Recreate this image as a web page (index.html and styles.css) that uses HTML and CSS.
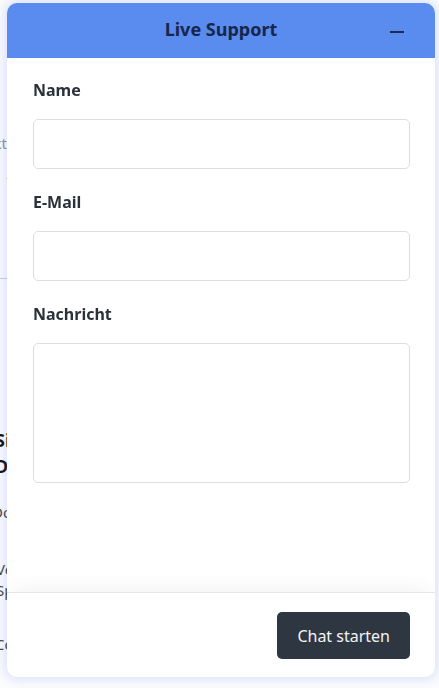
FILE: index.html
```html
<!DOCTYPE html>
<html lang="de">
<head>
<meta charset="utf-8">
<title>Live Support</title>
<link rel="stylesheet" href="styles.css">
</head>
<body>
<div class="page">
  <p class="bg-muted l1">Kontakt</p>
  <p class="bg-muted l2">–</p>
  <hr class="bg-rule">
  <h2 class="bg-head">Sichere Dokumente</h2>
  <p class="bg-text l3">Dokument</p>
  <p class="bg-text l4">Verwaltung<br>Speicher</p>
  <p class="bg-text l5">Contact</p>
</div>

<section class="chat">
  <header class="chat-header">
    <h1 class="chat-title">Live Support</h1>
    <button class="chat-min" aria-label="Minimieren">
      <svg width="14" height="2" viewBox="0 0 14 2"><rect width="14" height="2" fill="#1b2a4e"/></svg>
    </button>
  </header>
  <form class="chat-body">
    <label class="field-label">Name</label>
    <input class="field-input" type="text">
    <label class="field-label">E-Mail</label>
    <input class="field-input" type="email">
    <label class="field-label">Nachricht</label>
    <textarea class="field-area"></textarea>
  </form>
  <footer class="chat-footer">
    <button class="chat-start" type="button">Chat starten</button>
  </footer>
</section>
</body>
</html>
```
FILE: styles.css
```css
* { box-sizing: border-box; }
html, body { margin: 0; height: 100%; }
body {
  font-family: "Noto Sans", "Open Sans", "Liberation Sans", sans-serif;
  background: #fbfcfe;
  overflow: hidden;
}
.page {
  padding-top: 133px;
  margin-left: -50px;
  width: 200px;
}
.page p, .page h2 { margin: 0; white-space: nowrap; }
.bg-muted { color: #8a8f98; font-size: 15px; line-height: 20px; }
.l1 { margin-left: 2px !important; }
.l2 { margin: 17px 0 0 56px !important; font-size: 12px; line-height: 16px; }
.bg-rule { border: 0; border-top: 1px solid #cfd3da; margin: 92px 0 0; }
.bg-head { font-size: 18px; font-weight: 700; color: #111; line-height: 26px; margin: 148px 0 0 45px !important; white-space: normal !important; width: 60px; }
.bg-text { color: #444; font-size: 15px; line-height: 21px; }
.l3 { margin: 23px 0 0 42px !important; }
.l4 { margin: 36px 0 0 46px !important; }
.l5 { margin: 33px 0 0 45px !important; }

.chat {
  position: fixed;
  left: 7px;
  top: 3px;
  width: 428px;
  height: 674px;
  background: #fff;
  border-radius: 10px;
  box-shadow: 0 0 12px 2px rgba(90, 120, 220, 0.22);
  display: flex;
  flex-direction: column;
  overflow: hidden;
}
.chat-header {
  height: 55px;
  flex: none;
  background: #5a8bef;
  display: flex;
  align-items: center;
  justify-content: center;
  padding-bottom: 3px;
  position: relative;
}
.chat-title {
  margin: 0;
  font-size: 18px;
  font-weight: 700;
  color: #17264a;
}
.chat-min {
  position: absolute;
  right: 31px;
  top: 26px;
  padding: 0;
  border: 0;
  background: none;
  width: 14px;
  height: 2px;
  display: block;
  line-height: 0;
}
.chat-body {
  flex: 1;
  display: flex;
  flex-direction: column;
  padding: 20px 25px 0 26px;
}
.field-label {
  font-size: 16px;
  font-weight: 700;
  color: #2b313a;
  line-height: 24px;
  margin-bottom: 17px;
}
.field-input, .field-area {
  display: block;
  width: 100%;
  border: 1px solid #dcdde0;
  border-radius: 5px;
  background: #fff;
  font: inherit;
  margin: 0;
}
.field-input { height: 50px; margin-bottom: 21px; }
.field-area { height: 140px; resize: none; }
.chat-footer {
  flex: none;
  height: 85px;
  border-top: 1px solid #e6e6e8;
  box-shadow: 0 -10px 18px -6px rgba(0, 0, 0, 0.05);
  display: flex;
  justify-content: flex-end;
  align-items: flex-start;
  padding: 19px 25px 0 0;
}
.chat-start {
  height: 47px;
  padding: 0 20px;
  border: 0;
  border-radius: 5px;
  background: #2e3741;
  color: #f2f3f5;
  font-family: inherit;
  font-size: 16px;
}
```
